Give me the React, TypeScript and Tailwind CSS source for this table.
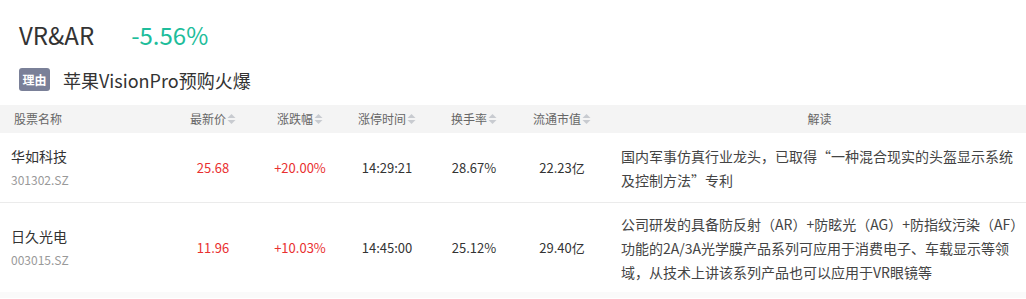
import React from "react";

const SortIcon = () => (
  <svg width="9" height="12" viewBox="0 0 9 12" className="ml-[1px] inline-block">
    <path d="M4.5 1 L8.5 5 L0.5 5 Z" fill="#c8cbd0" />
    <path d="M4.5 11 L8.5 7 L0.5 7 Z" fill="#c8cbd0" />
  </svg>
);

const rows = [
  {
    name: "华如科技",
    code: "301302.SZ",
    price: "25.68",
    chg: "+20.00%",
    time: "14:29:21",
    turnover: "28.67%",
    cap: "22.23亿",
    note: "国内军事仿真行业龙头，已取得“一种混合现实的头盔显示系统及控制方法”专利",
    h: "h-[70px]",
  },
  {
    name: "日久光电",
    code: "003015.SZ",
    price: "11.96",
    chg: "+10.03%",
    time: "14:45:00",
    turnover: "25.12%",
    cap: "29.40亿",
    note: "公司研发的具备防反射（AR）+防眩光（AG）+防指纹污染（AF）功能的2A/3A光学膜产品系列可应用于消费电子、车载显示等领域，从技术上讲该系列产品也可以应用于VR眼镜等",
    h: "h-[89px]",
  },
];

const grid = "grid grid-cols-[170px_86px_88px_86px_88px_88px_1fr]";

export default function App() {
  return (
    <div className="w-[1026px] h-[299px] bg-white overflow-hidden font-['Noto_Sans_CJK_SC','Noto_Sans',sans-serif] text-[#333]">
      <div className="h-[105px] pl-[19px]">
        <div className="flex items-center h-[68px] pt-[2px]">
          <span className="text-[24px] text-[#333] leading-none">VR&amp;AR</span>
          <span className="ml-[37px] text-[24px] text-[#1ebd9b] leading-none">-5.56%</span>
        </div>
        <div className="flex items-center">
          <span className="w-[31px] h-[23px] rounded-[3px] bg-[#7a8098] text-white text-[12px] font-bold flex items-center justify-center">理由</span>
          <span className="ml-[13px] text-[18px] text-[#333] leading-none">苹果VisionPro预购火爆</span>
        </div>
      </div>

      <div className={`${grid} h-[28px] bg-[#f4f4f4] text-[12px] text-[#666] items-center`}>
        <div className="pl-[14px]">股票名称</div>
        <div className="flex items-center justify-center">最新价<SortIcon /></div>
        <div className="flex items-center justify-center">涨跌幅<SortIcon /></div>
        <div className="flex items-center justify-center">涨停时间<SortIcon /></div>
        <div className="flex items-center justify-center">换手率<SortIcon /></div>
        <div className="flex items-center justify-center">流通市值<SortIcon /></div>
        <div className="text-center pl-[15px] pr-[8px]">解读</div>
      </div>

      {rows.map((r, i) => (
        <div
          key={r.code}
          className={`${grid} ${r.h} items-center text-[13px] ${i === 0 ? "border-b border-[#ebebeb]" : ""}`}
        >
          <div className="pl-[11px] flex flex-col">
            <span className="text-[14px] leading-[23px] text-[#333]">{r.name}</span>
            <span className="text-[12px] leading-[23px] text-[#999]">{r.code}</span>
          </div>
          <div className="text-center text-[#e93030]">{r.price}</div>
          <div className="text-center text-[#e93030]">{r.chg}</div>
          <div className="text-center">{r.time}</div>
          <div className="text-center">{r.turnover}</div>
          <div className="text-center">{r.cap}</div>
          <div className="pl-[15px] pr-[8px] text-[14px] leading-[24px] text-[#444]">{r.note}</div>
        </div>
      ))}
      <div className="h-[6px] bg-[#fafafa]" />
    </div>
  );
}
